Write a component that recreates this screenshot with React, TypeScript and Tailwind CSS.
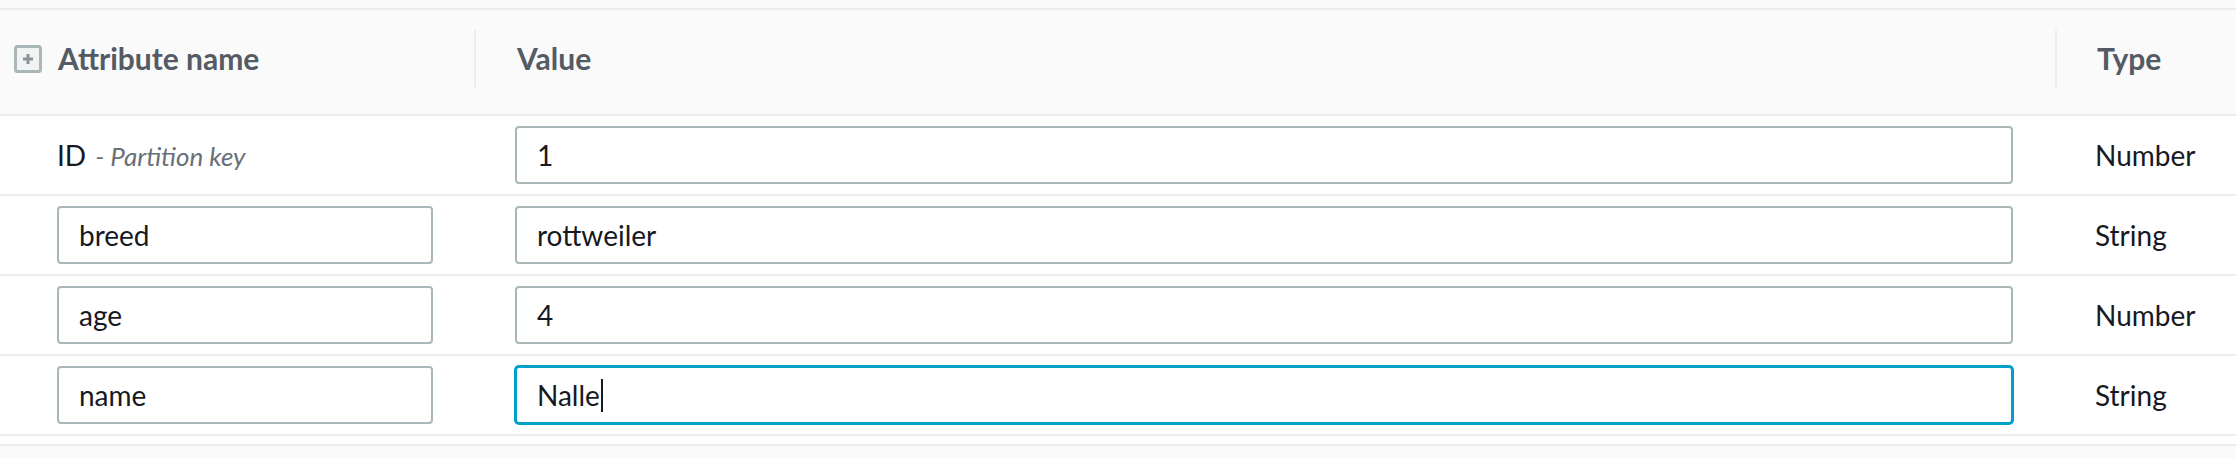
import React from "react";

const font = { fontFamily: "Lato, 'Open Sans', sans-serif" };

type Row = {
  name: string;
  value: string;
  type: string;
  key?: boolean;
  focused?: boolean;
};

const rows: Row[] = [
  { name: "ID", value: "1", type: "Number", key: true },
  { name: "breed", value: "rottweiler", type: "String" },
  { name: "age", value: "4", type: "Number" },
  { name: "name", value: "Nalle", type: "String", focused: true },
];

const PlusBox = () => (
  <svg width="28" height="28" viewBox="0 0 28 28" className="shrink-0">
    <rect x="1.5" y="1.5" width="25" height="25" rx="2" fill="#f2f3f3" stroke="#aab7b8" strokeWidth="3" />
    <path d="M14 9v10M9 14h10" stroke="#879596" strokeWidth="3" />
  </svg>
);

const Field = ({ text, focused }: { text: string; focused?: boolean }) => (
  <div
    className={
      "flex h-[58px] w-full items-center rounded-[4px] border-2 bg-white pl-[20px] text-[28px] text-[#16191f] " +
      (focused ? "border-[#00a1c9] shadow-[0_0_0_1px_#00a1c9]" : "border-[#aab7b8]")
    }
  >
    <span>{text}</span>
    {focused && <span className="ml-[1px] h-[33px] w-[2px] bg-[#16191f]" />}
  </div>
);

const App = () => {
  return (
    <div className="flex h-[458px] w-full flex-col bg-white" style={font}>
      <div className="h-[8px] bg-[#fafafa]" />
      <div className="h-[2px] bg-[#eaeded]" />

      <div className="grid h-[106px] grid-cols-[474px_1581px_1fr] border-b-2 border-[#eaeded] bg-[#fafafa] pt-[20px] text-[30px] font-bold text-[#545b64]">
        <div className="flex h-[57px] items-center gap-[16px] pl-[14px]">
          <PlusBox />
          <span>Attribute name</span>
        </div>
        <div className="flex h-[57px] items-center border-l-2 border-[#eaeded] pl-[41px]">Value</div>
        <div className="flex h-[57px] items-center border-l-2 border-[#eaeded] pl-[40px]">Type</div>
      </div>

      {rows.map((r) => (
        <div
          key={r.name}
          className="grid h-[80px] grid-cols-[474px_1581px_1fr] items-center border-b-2 border-[#eaeded] text-[28px] text-[#16191f]"
        >
          <div className="pl-[57px] pr-[41px]">
            {r.key ? (
              <div className="flex items-baseline">
                <span>{r.name}</span>
                <span className="ml-[9px] text-[26px] italic text-[#687078]">- Partition key</span>
              </div>
            ) : (
              <Field text={r.name} />
            )}
          </div>
          <div className="pl-[41px] pr-[42px]">
            <Field text={r.value} focused={r.focused} />
          </div>
          <div className="pl-[40px]">{r.type}</div>
        </div>
      ))}

      <div className="h-[8px] bg-white" />
      <div className="flex-1 border-t-2 border-[#eaeded] bg-[#fafafa]" />
    </div>
  );
};

export default App;
